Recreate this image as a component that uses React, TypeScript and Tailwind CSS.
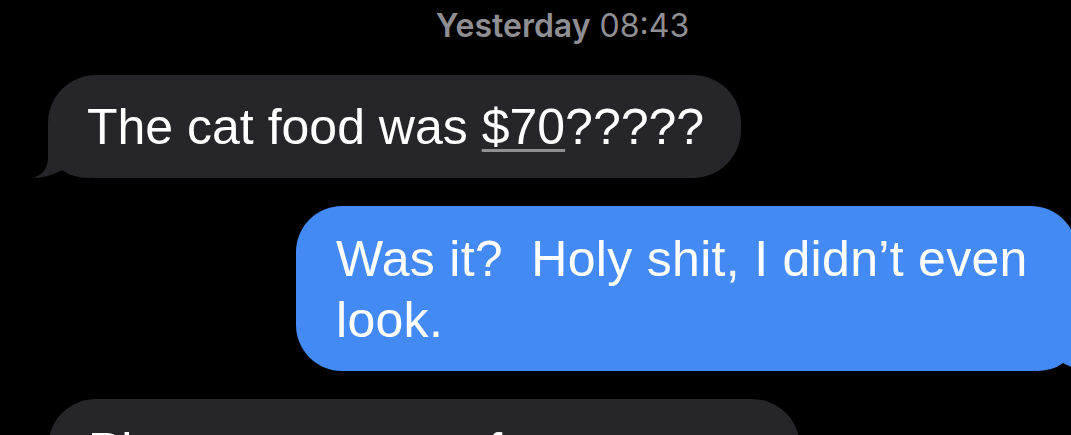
import React from "react";

function TailLeft({ color }: { color: string }) {
  return (
    <svg
      className="pointer-events-none absolute bottom-0 left-[-16px]"
      width="60"
      height="50"
      viewBox="0 0 60 50"
    >
      <path d="M16 0 L16 30 C16 41 9 48 0 50 C11 50 21 47 30 42 Q40 50 58 50 L58 0 Z" fill={color} />
    </svg>
  );
}

function TailRight({ color }: { color: string }) {
  return (
    <svg
      className="pointer-events-none absolute bottom-0 right-[-16px]"
      width="60"
      height="50"
      viewBox="0 0 60 50"
    >
      <path d="M44 0 L44 30 C44 41 51 48 60 50 C49 50 39 47 30 42 Q20 50 2 50 L2 0 Z" fill={color} />
    </svg>
  );
}

export default function App() {
  return (
    <div className="h-[435px] w-[1071px] overflow-hidden bg-black font-['Liberation_Sans',Arial,sans-serif] text-white">
      <div className="flex justify-center pl-[54px] pt-[6px] font-['Inter',sans-serif] text-[32px] leading-[40px] text-[#8e8e93]">
        <span className="font-semibold">Yesterday</span>
        <span className="ml-[9px]">08:43</span>
      </div>

      <div className="mt-[29px] flex pl-[48px]">
        <div className="relative rounded-[48px] bg-[#262529] pb-[20px] pl-[39px] pr-[37px] pt-[22px] text-[50px] leading-[61px]">
          <TailLeft color="#262529" />
          <span className="relative">
            The cat food was{" "}
            <span className="underline decoration-[#8e8e93] decoration-[3px] underline-offset-[5px]">$70</span>?????
          </span>
        </div>
      </div>

      <div className="mt-[28px] flex justify-end">
        <div className="relative mr-[-6px] w-[781px] shrink-0 rounded-[46px] bg-[#448af5] pb-[20px] pl-[40px] pr-[40px] pt-[23px] text-[50px] leading-[61px]">
          <TailRight color="#448af5" />
          <p className="relative tracking-[0.3px]">Was it?&nbsp; Holy shit, I didn’t even look.</p>
        </div>
      </div>

      <div className="mt-[28px] flex pl-[48px]">
        <div className="w-[752px] rounded-[48px] bg-[#262529] pb-[20px] pl-[40px] pr-[40px] pt-[22px] text-[50px] leading-[61px]">
          Please never use fancy cat food at all
        </div>
      </div>
    </div>
  );
}
